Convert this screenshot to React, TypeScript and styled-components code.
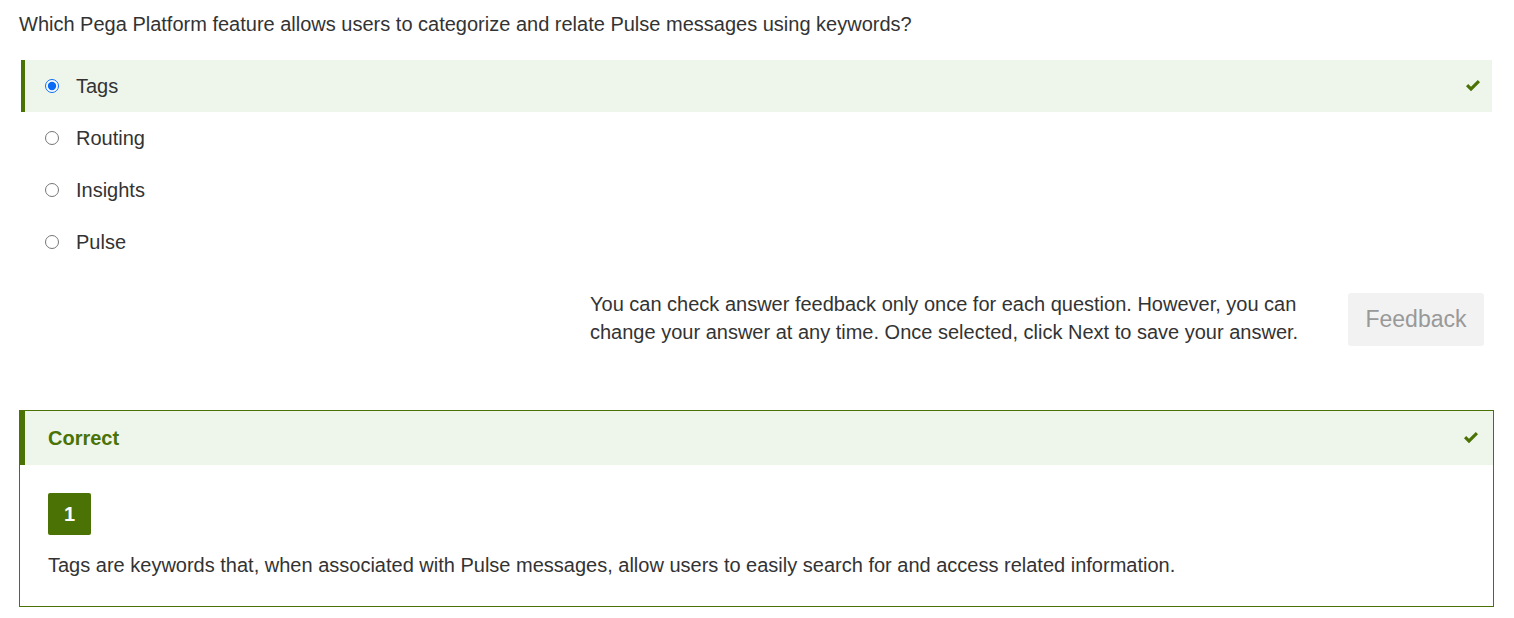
import React from "react";
import styled, { createGlobalStyle } from "styled-components";

const GREEN = "#4b7205";
const LIGHT = "#eef6ec";
const TEXT = "#333333";

const Global = createGlobalStyle`
  html, body { margin: 0; padding: 0; background: #fff; }
  body { font-family: "Liberation Sans", Arial, sans-serif; color: ${TEXT}; }
`;

const Page = styled.div`
  width: 1475px;
  padding: 10px 0 0 19px;
  display: flex;
  flex-direction: column;
`;

const Question = styled.p`
  margin: 0 0 22px;
  font-size: 20px;
  line-height: 28px;
`;

const Options = styled.div`
  display: flex;
  flex-direction: column;
  margin: 0 2px;
`;

const OptionRow = styled.label<{ $selected?: boolean }>`
  height: 52px;
  box-sizing: border-box;
  display: flex;
  align-items: center;
  padding: 0 11px 0 20px;
  border-left: 4px solid ${(p) => (p.$selected ? GREEN : "transparent")};
  background: ${(p) => (p.$selected ? LIGHT : "transparent")};
  font-size: 20px;
`;

const Radio = styled.input`
  width: 14px;
  height: 14px;
  margin: 0 17px 0 0;
  accent-color: #0a6cf5;
`;

const OptionText = styled.span`
  flex: 1;
`;

const Check = ({ size = 16 }: { size?: number }) => (
  <svg width={size} height={(size * 12) / 16} viewBox="0 0 16 12">
    <path d="M1 6.2 L3.2 4 L6 6.8 L12.8 0 L15 2.2 L6 11.2 Z" fill={GREEN} />
  </svg>
);

const FeedbackRow = styled.div`
  margin-top: 22px;
  display: flex;
  justify-content: flex-end;
  align-items: flex-start;
  gap: 48px;
  padding-right: 10px;
`;

const Note = styled.p`
  margin: 0;
  width: 710px;
  font-size: 20px;
  line-height: 28px;
`;

const FeedbackButton = styled.button`
  margin-top: 3px;
  width: 136px;
  height: 53px;
  border: none;
  border-radius: 3px;
  background: #f2f2f2;
  color: #999999;
  font-family: "Liberation Sans", Arial, sans-serif;
  font-size: 23px;
  cursor: default;
`;

const Panel = styled.section`
  margin-top: 64px;
  border: 1px solid ${GREEN};
  display: flex;
  flex-direction: column;
`;

const PanelHeader = styled.div`
  height: 54px;
  box-sizing: border-box;
  display: flex;
  align-items: center;
  justify-content: space-between;
  padding: 0 14px 0 23px;
  border-left: 5px solid ${GREEN};
  background: ${LIGHT};
`;

const PanelTitle = styled.h3`
  margin: 0;
  font-size: 20px;
  font-weight: bold;
  color: ${GREEN};
`;

const PanelBody = styled.div`
  padding: 28px 28px 27px;
  display: flex;
  flex-direction: column;
  align-items: flex-start;
`;

const Badge = styled.span`
  width: 43px;
  height: 42px;
  border-radius: 2px;
  background: ${GREEN};
  color: #fff;
  font-weight: bold;
  font-size: 20px;
  display: flex;
  align-items: center;
  justify-content: center;
`;

const Explanation = styled.p`
  margin: 16px 0 0;
  font-size: 20px;
  line-height: 28px;
`;

const options = ["Tags", "Routing", "Insights", "Pulse"];

export default function App() {
  return (
    <>
      <Global />
      <Page>
        <Question>
          Which Pega Platform feature allows users to categorize and relate Pulse messages using keywords?
        </Question>
        <Options>
          {options.map((o, i) => (
            <OptionRow key={o} $selected={i === 0}>
              <Radio type="radio" name="answer" defaultChecked={i === 0} />
              <OptionText>{o}</OptionText>
              {i === 0 && <Check />}
            </OptionRow>
          ))}
        </Options>
        <FeedbackRow>
          <Note>
            You can check answer feedback only once for each question. However, you can change your answer at any time. Once selected, click Next to save your answer.
          </Note>
          <FeedbackButton type="button">Feedback</FeedbackButton>
        </FeedbackRow>
        <Panel>
          <PanelHeader>
            <PanelTitle>Correct</PanelTitle>
            <Check />
          </PanelHeader>
          <PanelBody>
            <Badge>1</Badge>
            <Explanation>
              Tags are keywords that, when associated with Pulse messages, allow users to easily search for and access related information.
            </Explanation>
          </PanelBody>
        </Panel>
      </Page>
    </>
  );
}
